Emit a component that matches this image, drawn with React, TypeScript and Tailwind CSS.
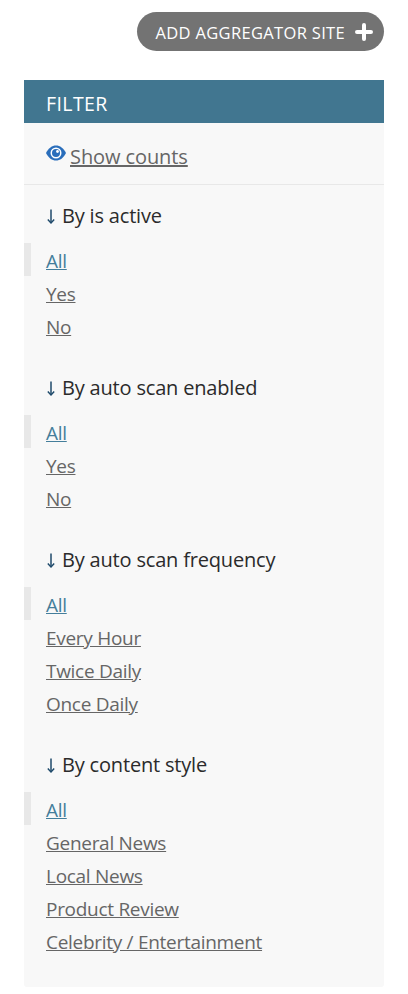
const FILTERS = [
  { title: "By is active", options: ["All", "Yes", "No"] },
  { title: "By auto scan enabled", options: ["All", "Yes", "No"] },
  { title: "By auto scan frequency", options: ["All", "Every Hour", "Twice Daily", "Once Daily"] },
  { title: "By content style", options: ["All", "General News", "Local News", "Product Review", "Celebrity / Entertainment"] },
];

function FilterGroup({ title, options }: { title: string; options: string[] }) {
  return (
    <div className="pb-[32px] last:pb-[30px]">
      <h3 className="flex h-[28px] items-center pl-[23px] text-[20px] font-normal leading-[28px] tracking-[-0.18px] text-[#2b2b2b]">
        <svg width="8" height="15" viewBox="0 0 8 15" fill="none" stroke="#1f4a6b" className="mr-[7px] mt-[1px]">
          <path d="M4 0.500V13.500" strokeWidth="1.500" />
          <path d="M0.800 10.500L4 14L7.200 10.500" strokeWidth="1.400" />
        </svg>
        {title}
      </h3>
      <ul className="mt-[13px]">
        {options.map((option, i) => (
          <li
            key={option}
            className={
              i === 0
                ? "h-[33px] border-l-[7px] border-[#e8e8e8] pl-[15px] pt-[2px] leading-[33px]"
                : "h-[33px] pl-[22px] pt-[2px] leading-[33px]"
            }
          >
            <a href="#" className={i === 0 ? "text-[#447e9b] underline" : "text-[#666] underline"}>
              {option}
            </a>
          </li>
        ))}
      </ul>
    </div>
  );
}

export default function App() {
  return (
    <div className="h-[994px] overflow-hidden bg-white font-['Open_Sans',sans-serif] text-[19px] tracking-[-0.29px]">
      <div className="flex justify-end px-6 pt-3">
        <a
          href="#"
          className="flex h-[39px] items-center gap-[10px] rounded-full bg-[#737373] pl-[19px] pr-[11px] text-[16.500px] tracking-[0.33px] text-white"
        >
          <span className="pt-[3px]">ADD AGGREGATOR SITE</span>
          <svg width="18" height="18" viewBox="0 0 18 18" fill="none" stroke="white" strokeWidth="4" strokeLinecap="round">
            <path d="M9 2V16M2 9H16" />
          </svg>
        </a>
      </div>

      <div className="mx-6 mt-[29px] rounded-b-[3px] bg-[#f8f8f8]">
        <h2 className="h-[43px] bg-[#417690] pl-[22px] text-[19.500px] font-normal leading-[47px] tracking-[0.4px] text-white">
          FILTER
        </h2>
        <div className="flex h-[62px] items-start border-b border-[#e8e8e8] pl-[22px] pt-[20px]">
          <svg width="20" height="16" viewBox="0 0 20 16" className="mr-[4px] mt-[2px]">
            <path d="M0 8C2.500 3 6 0.500 10 0.500S17.500 3 20 8C17.500 13 14 15.500 10 15.500S2.500 13 0 8Z" fill="#2a6ebb" />
            <circle cx="10" cy="8" r="5.500" fill="white" />
            <circle cx="10" cy="8" r="4" fill="#2a6ebb" />
            <circle cx="11.500" cy="6.500" r="1.400" fill="white" />
          </svg>
          <a href="#" className="text-[20px] leading-[28px] tracking-[-0.09px] text-[#666] underline">
            Show counts
          </a>
        </div>
        <div className="pt-[17px]">
          {FILTERS.map((group) => (
            <FilterGroup key={group.title} title={group.title} options={group.options} />
          ))}
        </div>
      </div>
    </div>
  );
}
